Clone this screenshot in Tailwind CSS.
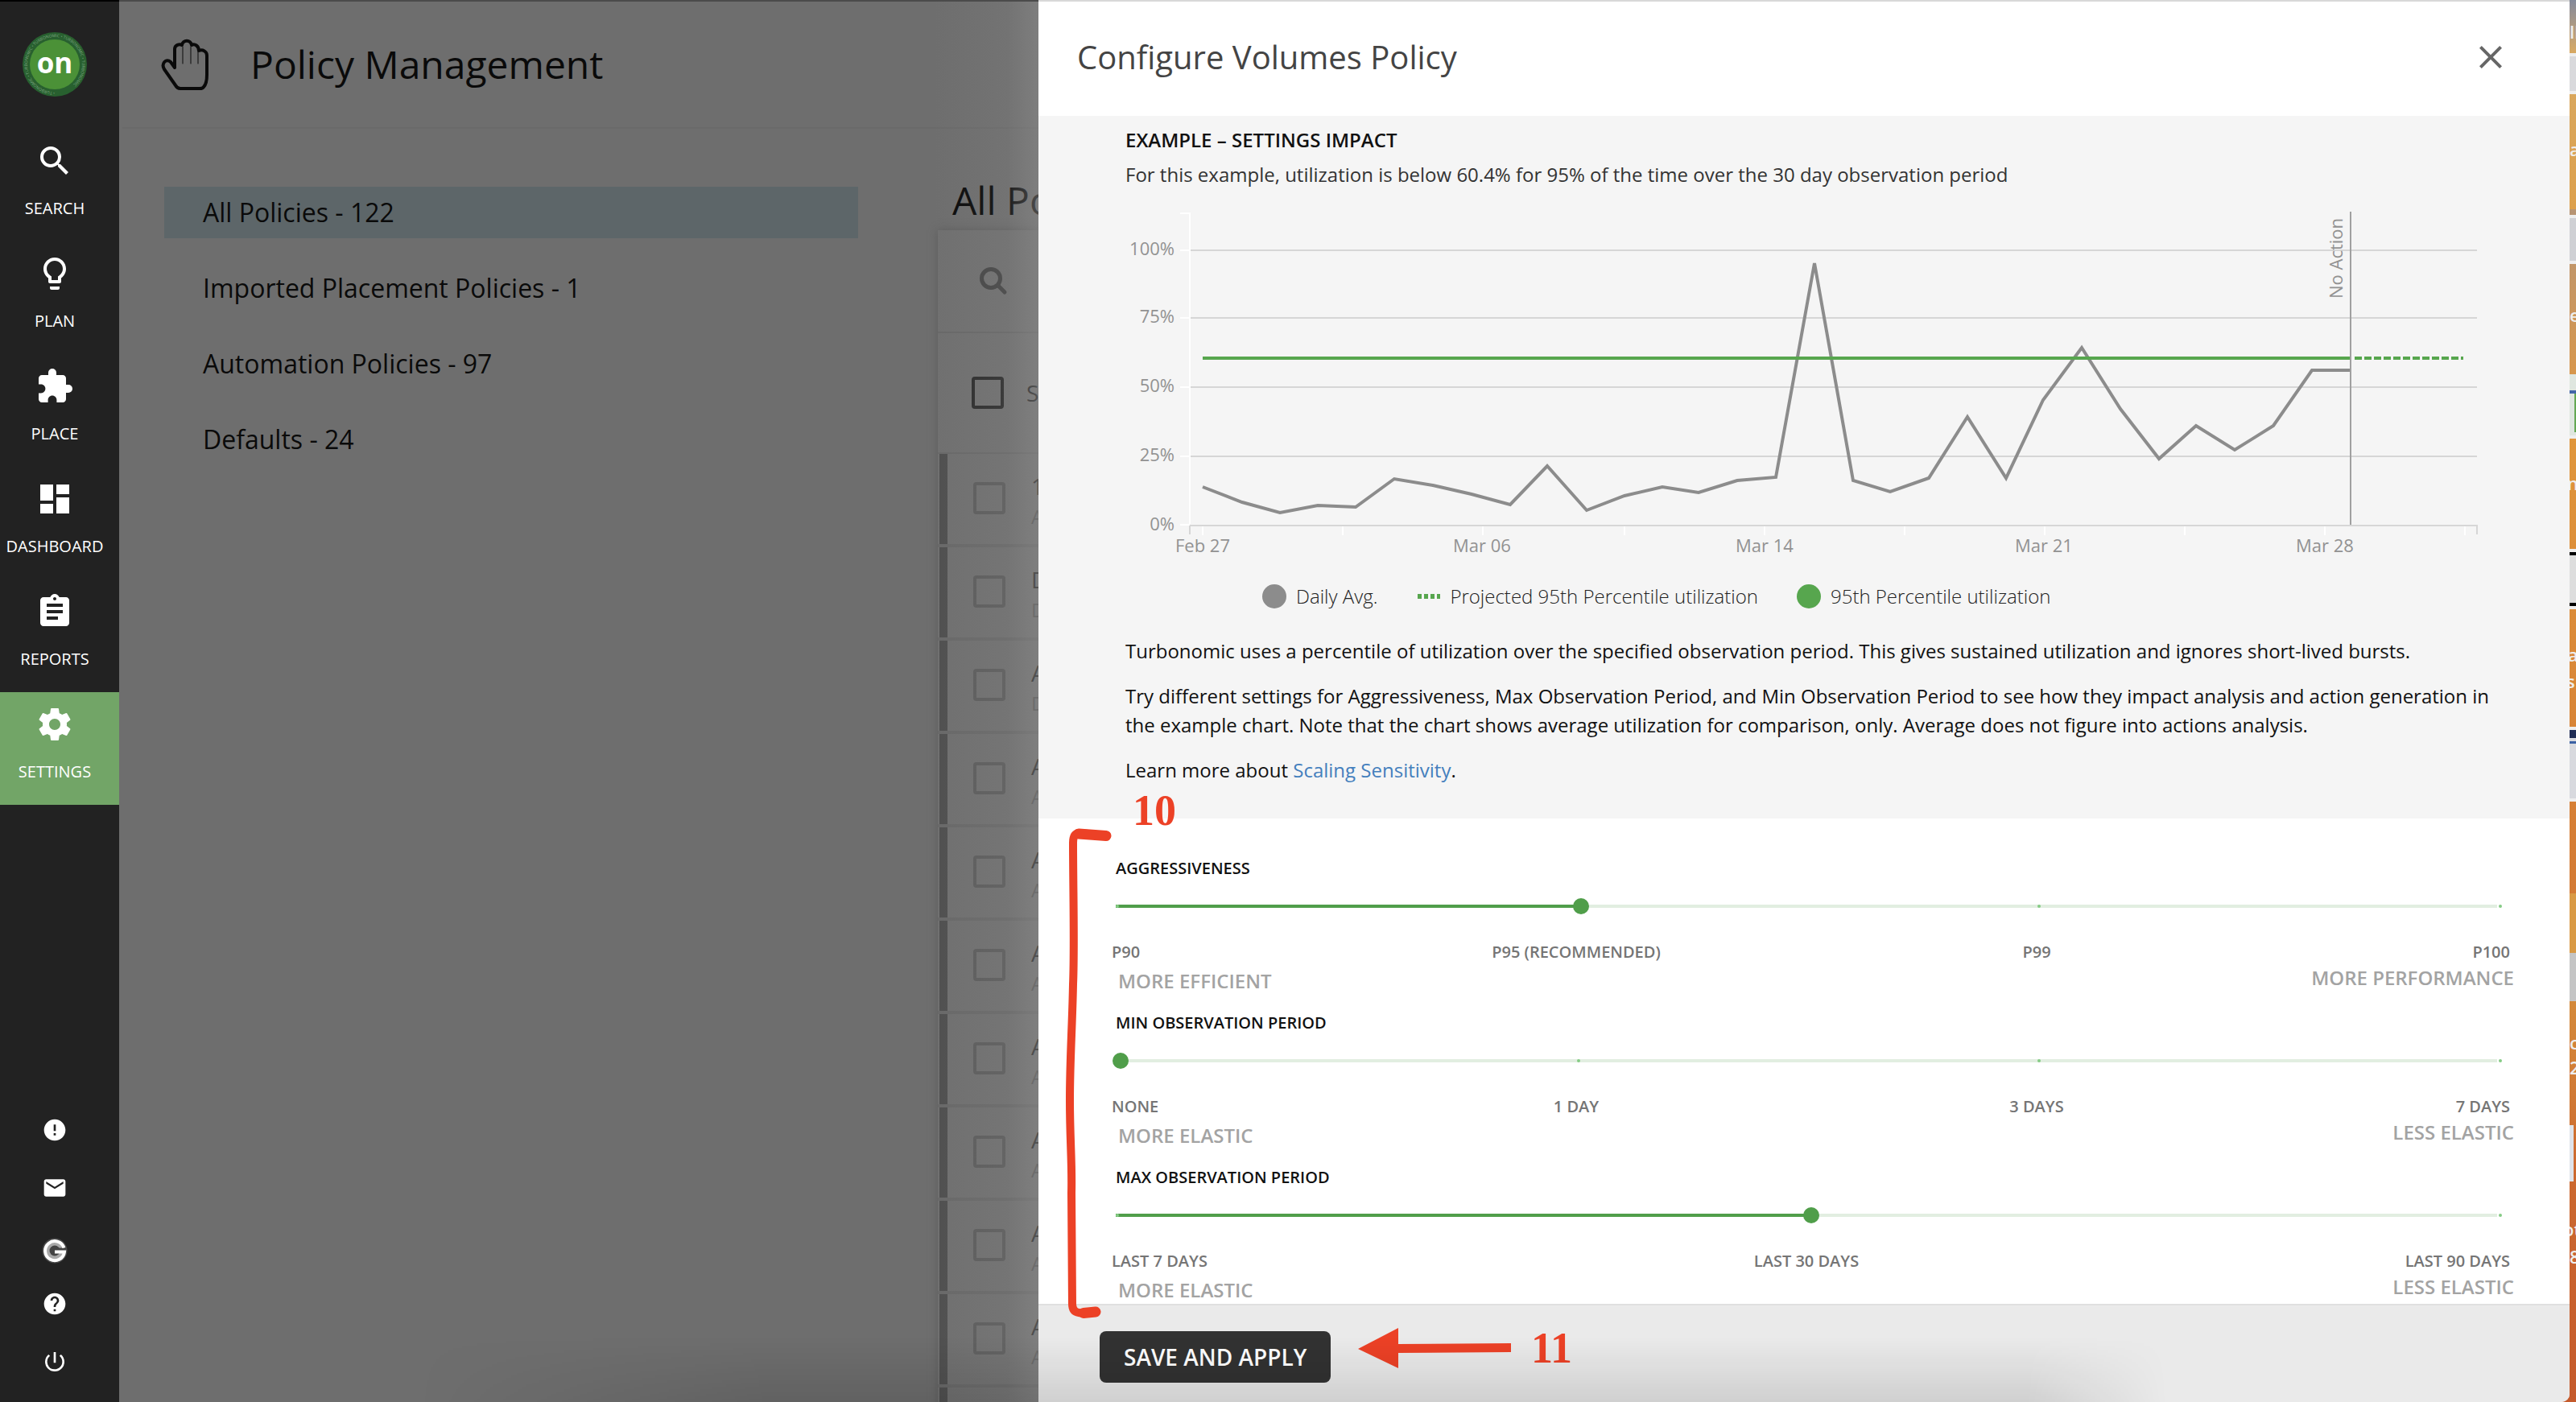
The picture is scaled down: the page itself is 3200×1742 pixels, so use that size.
<!DOCTYPE html>
<html lang="en">
<head>
<meta charset="utf-8">
<title>Policy Management</title>
<script src="https://cdn.jsdelivr.net/npm/@tailwindcss/browser@4"></script>
</head>
<body class="flex h-screen overflow-hidden bg-[#d9853a] font-['Open_Sans',sans-serif]">

<div class="relative z-10 flex min-w-0 flex-1 overflow-hidden rounded-br-[10px]">

  <!-- Primary navigation -->
  <nav class="flex w-[148px] shrink-0 flex-col border-t-2 border-black bg-[#222] pr-3 text-xl leading-7 text-white">
    <a href="#" class="mt-[38px] self-center" aria-label="Turbonomic home">
      <svg class="size-20" viewBox="0 0 80 80">
        <circle cx="40" cy="40" r="40" fill="#28602f"/>
        <circle cx="40" cy="40" r="31" fill="#4b9137"/>
        <defs><path id="ring" d="M40 74 A34 34 0 1 1 40.1 74"/></defs>
        <text fill="#7fa583" font-size="5" font-family="Open Sans"><textPath href="#ring">• TURBONOMIC • TURBONOMIC • TURBONOMIC • TURBONOMIC • TURBONOMIC</textPath></text>
        <text x="40" y="51" text-anchor="middle" fill="#fff" font-size="35" font-weight="700" font-family="Open Sans">on</text>
      </svg>
    </a>
    <a href="#" class="-mr-3 mt-10 flex h-[140px] flex-col items-center gap-[21px] pr-3 pt-4">
      <svg class="size-12 shrink-0" viewBox="0 0 24 24" fill="currentColor"><path d="M15.5 14h-.79l-.28-.27A6.47 6.47 0 0 0 16 9.5 6.5 6.5 0 1 0 9.5 16c1.61 0 3.09-.59 4.23-1.57l.27.28v.79l5 4.99L20.49 19l-4.99-5zm-6 0C7.01 14 5 11.99 5 9.500S7.010 5 9.500 5 14 7.010 14 9.500 11.990 14 9.500 14z"/></svg>
      <span>SEARCH</span>
    </a>
    <a href="#" class="-mr-3 flex h-[140px] flex-col items-center gap-[21px] pr-3 pt-4">
      <svg class="size-12 shrink-0" viewBox="0 0 24 24" fill="currentColor"><path d="M9 21c0 .55.45 1 1 1h4c.55 0 1-.45 1-1v-1H9v1zm3-19C8.140 2 5 5.140 5 9c0 2.380 1.190 4.470 3 5.740V17c0 .55.45 1 1 1h6c.55 0 1-.45 1-1v-2.260c1.810-1.270 3-3.360 3-5.740 0-3.860-3.140-7-7-7zm2.850 11.100l-.85.6V16h-4v-2.300l-.85-.6A4.997 4.997 0 0 1 7 9c0-2.760 2.240-5 5-5s5 2.240 5 5c0 1.630-.8 3.160-2.150 4.100z"/></svg>
      <span>PLAN</span>
    </a>
    <a href="#" class="-mr-3 flex h-[140px] flex-col items-center gap-[21px] pr-3 pt-4">
      <svg class="size-12 shrink-0" viewBox="0 0 24 24" fill="currentColor"><path d="M20.500 11H19V7c0-1.100-.9-2-2-2h-4V3.500a2.500 2.500 0 0 0-5 0V5H4c-1.100 0-1.990.9-1.990 2v3.800H3.500c1.490 0 2.700 1.210 2.700 2.700s-1.210 2.700-2.700 2.700H2V20c0 1.100.9 2 2 2h3.800v-1.500c0-1.490 1.210-2.700 2.700-2.700s2.700 1.210 2.700 2.700V22H17c1.100 0 2-.9 2-2v-4h1.500a2.500 2.500 0 0 0 0-5z"/></svg>
      <span>PLACE</span>
    </a>
    <a href="#" class="-mr-3 flex h-[140px] flex-col items-center gap-[21px] pr-3 pt-4">
      <svg class="size-12 shrink-0" viewBox="0 0 24 24" fill="currentColor"><path d="M3 13h8V3H3v10zm0 8h8v-6H3v6zm10 0h8V11h-8v10zm0-18v6h8V3h-8z"/></svg>
      <span>DASHBOARD</span>
    </a>
    <a href="#" class="-mr-3 flex h-[140px] flex-col items-center gap-[21px] pr-3 pt-4">
      <svg class="size-12 shrink-0" viewBox="0 0 24 24" fill="currentColor"><path d="M19 3h-4.180C14.400 1.840 13.300 1 12 1c-1.300 0-2.400.84-2.820 2H5c-1.100 0-2 .9-2 2v14c0 1.100.9 2 2 2h14c1.100 0 2-.9 2-2V5c0-1.100-.9-2-2-2zm-7 0c.55 0 1 .45 1 1s-.45 1-1 1-1-.45-1-1 .45-1 1-1zm2 14H7v-2h7v2zm3-4H7v-2h10v2zm0-4H7V7h10v2z"/></svg>
      <span>REPORTS</span>
    </a>
    <a href="#" aria-current="page" class="-mr-3 flex h-[140px] flex-col items-center gap-[21px] bg-[#72a567] pr-3 pt-4">
      <svg class="size-12 shrink-0" viewBox="0 0 24 24" fill="currentColor"><path d="M19.430 12.980c.04-.32.07-.64.07-.98s-.03-.66-.07-.98l2.110-1.650c.19-.15.24-.42.12-.64l-2-3.460c-.12-.22-.39-.3-.61-.22l-2.490 1c-.52-.4-1.080-.73-1.690-.98l-.38-2.650A.488.488 0 0 0 14 2h-4c-.25 0-.46.18-.49.42l-.38 2.650c-.61.25-1.170.59-1.690.98l-2.490-1c-.23-.09-.49 0-.61.22l-2 3.460c-.13.22-.07.49.12.64l2.110 1.650c-.04.32-.07.65-.07.98s.03.66.07.98l-2.110 1.650c-.19.15-.24.42-.12.64l2 3.460c.12.22.39.3.61.22l2.490-1c.52.4 1.080.73 1.690.98l.38 2.650c.03.24.24.42.49.42h4c.25 0 .46-.18.49-.42l.38-2.650c.61-.25 1.170-.59 1.690-.98l2.490 1c.23.09.49 0 .61-.22l2-3.460c.12-.22.07-.49-.12-.64l-2.110-1.650zM12 15.500c-1.930 0-3.500-1.570-3.500-3.500s1.570-3.500 3.500-3.500 3.500 1.570 3.500 3.500-1.570 3.500-3.500 3.500z"/></svg>
      <span>SETTINGS</span>
    </a>
    <div class="mt-auto flex flex-col items-center gap-10 pb-[34px]">
      <a href="#" aria-label="Alerts"><svg class="size-8" viewBox="0 0 24 24" fill="currentColor"><path d="M12 2C6.480 2 2 6.480 2 12s4.480 10 10 10 10-4.480 10-10S17.520 2 12 2zm1 15h-2v-2h2v2zm0-4h-2V7h2v6z"/></svg></a>
      <a href="#" aria-label="Mail"><svg class="size-8" viewBox="0 0 24 24" fill="currentColor"><path d="M20 4H4c-1.100 0-1.990.9-1.990 2L2 18c0 1.100.9 2 2 2h16c1.100 0 2-.9 2-2V6c0-1.100-.9-2-2-2zm0 4l-8 5-8-5V6l8 5 8-5v2z"/></svg></a>
      <a href="#" aria-label="Green Circle" class="mt-[6px]"><svg class="size-8" viewBox="0 0 32 32"><circle cx="16" cy="16" r="15.500" fill="#4a4a4a"/><circle cx="16" cy="16" r="11" fill="#a9a9a9"/><circle cx="16" cy="16" r="6.500" fill="#444"/><path d="M16 12.500H30V16H16z" fill="#444"/><path d="M27.500 12.500 A12 12 0 1 0 28 17.500 H16" fill="none" stroke="#fff" stroke-width="4"/></svg></a>
      <a href="#" aria-label="Help" class="-mt-[6px]"><svg class="size-8" viewBox="0 0 24 24" fill="currentColor"><path d="M12 2C6.480 2 2 6.480 2 12s4.480 10 10 10 10-4.480 10-10S17.520 2 12 2zm1 17h-2v-2h2v2zm2.070-7.750l-.9.92C13.450 12.900 13 13.500 13 15h-2v-.5c0-1.100.45-2.100 1.170-2.830l1.240-1.260c.37-.36.59-.86.59-1.410 0-1.100-.9-2-2-2s-2 .9-2 2H8c0-2.210 1.790-4 4-4s4 1.790 4 4c0 .88-.36 1.680-.93 2.250z"/></svg></a>
      <a href="#" aria-label="Log out"><svg class="size-8" viewBox="0 0 24 24" fill="currentColor"><path d="M13 3h-2v10h2V3zm4.830 2.170l-1.420 1.420A6.920 6.920 0 0 1 19 12c0 3.870-3.130 7-7 7A6.995 6.995 0 0 1 7.580 6.580L6.170 5.170A8.932 8.932 0 0 0 3 12a9 9 0 0 0 18 0c0-2.740-1.230-5.180-3.170-6.830z"/></svg></a>
    </div>
  </nav>

  <!-- Page behind the drawer -->
  <main class="relative flex min-w-0 flex-1 flex-col overflow-hidden whitespace-nowrap border-t-2 border-[#4b4b4b] bg-[#6e6e6e] text-[#0a0a0a]">
    <header class="ml-1 flex h-[158px] shrink-0 items-center border-b-2 border-[#6a6a6a] pl-12">
      <svg class="h-16 w-[60px]" viewBox="0 0 60 64" fill="none" stroke="#0a0a0a" stroke-linejoin="round" stroke-linecap="round">
        <path stroke-width="4" d="M17 36 V13 C17 8 23 6 26 8 C27 1 37 1 38 8 C42 6 47 9 47 15 C52 13 57 16 57 21 V45 C57 53 55 58 53 60 C52 62 50 62 48 62 H24 C21 62 19 60 18 58 L4 38 C0 31 6 24 12 29 L17 36"/>
        <path stroke-width="1" d="M27 10 V31 M37 10 V31 M46 16 V31"/>
      </svg>
      <h1 class="ml-[51px] text-5xl leading-none">Policy Management</h1>
    </header>
    <div class="flex min-h-0 flex-1">
      <ul class="ml-14 mt-[72px] flex w-[862px] shrink-0 flex-col gap-[30px] text-[32px] leading-[64px]">
        <li class="bg-[#5d6669] pl-12"><a href="#">All Policies - 122</a></li>
        <li class="pl-12"><a href="#">Imported Placement Policies - 1</a></li>
        <li class="pl-12"><a href="#">Automation Policies - 97</a></li>
        <li class="pl-12"><a href="#">Defaults - 24</a></li>
      </ul>
      <section class="ml-[99px] mt-[57px] flex min-w-0 flex-1 flex-col">
        <h2 class="pl-[18px] text-5xl leading-[64px]">All Policies</h2>
        <div class="mt-[5px] flex-1 bg-[#707070] shadow-[0_0_10px_#5c5c5c]">
          <div class="flex h-32 items-center border-b-2 border-[#686868] pl-[51px]">
            <svg class="size-9" viewBox="0 0 36 36" fill="none" stroke="#464646" stroke-width="5" stroke-linecap="round"><circle cx="15" cy="15" r="11.500"/><path d="M24 24l8 8"/></svg>
          </div>
          <div class="flex h-[150px] items-center border-b-2 border-[#696969] pl-[42px] text-[28px] text-[#1c1c1c]">
            <input id="all" type="checkbox" class="size-10 shrink-0 appearance-none rounded border-4 border-[#2d2d2d]">
            <label for="all" class="ml-7">Select All</label>
          </div>
          <ul id="policies"></ul>
        </div>
      </section>
    </div>
    <div class="pointer-events-none absolute inset-y-0 right-0 w-[130px] bg-linear-to-r from-[#8e8e8e]/0 via-[#8e8e8e]/15 via-70% to-[#8e8e8e]/50"></div>
  </main>

  <!-- Policy drawer -->
  <aside class="relative flex w-[1902px] max-w-[60%] shrink-0 flex-col border-t-2 border-[#d8d8d8] bg-white">
    <header class="flex h-[142px] shrink-0 items-center justify-between pb-1 pl-12 pr-[74px]">
      <h2 class="text-[40px] leading-none text-[#444]">Configure Volumes Policy</h2>
      <button type="button" aria-label="Close"><svg class="size-12" viewBox="0 0 24 24" fill="#666"><path d="M19 6.410L17.590 5 12 10.590 6.410 5 5 6.410 10.590 12 5 17.590 6.410 19 12 13.410 17.590 19 19 17.590 13.410 12z"/></svg></button>
    </header>

    <section class="bg-[#f5f5f5] pb-[42px] pl-[108px] pr-24 pt-4 text-2xl leading-9 text-[#111]">
      <h3 class="font-semibold leading-7">EXAMPLE – SETTINGS IMPACT</h3>
      <p class="mt-[11px] text-[#333]">For this example, utilization is below 60.4% for 95% of the time over the 30 day observation period</p>

      <svg class="mt-[11px] block w-full" viewBox="0 0 1698 450" role="img" aria-label="Utilization chart">
        <g stroke="#d6d6d6" stroke-width="2" fill="none">
          <path d="M80 65H1679M80 149H1679M80 235H1679M80 321H1679M80 418V407H1679V418"/>
        </g>
        <path stroke="#fff" stroke-width="2" fill="none" d="M68 19H80V405M68 65H80M68 149H80M68 235H80M68 321H80M68 406H80"/>
        <path stroke="#fff" stroke-width="2" fill="none" d="M96 408v11M270 408v11M444 408v11M620 408v11M794 408v11M968 408v11M1142 408v11M1316 408v11M1490 408v11M1664 408v11"/>
        <g fill="#929292" font-family="Open Sans" font-size="22" text-anchor="end">
          <text x="61" y="71">100%</text><text x="61" y="155">75%</text><text x="61" y="241">50%</text><text x="61" y="327">25%</text><text x="61" y="413">0%</text>
        </g>
        <g fill="#929292" font-family="Open Sans" font-size="22" text-anchor="middle">
          <text x="96" y="440">Feb 27</text><text x="443" y="440">Mar 06</text><text x="794" y="440">Mar 14</text><text x="1141" y="440">Mar 21</text><text x="1490" y="440">Mar 28</text>
        </g>
        <polyline fill="none" stroke="#8c8c8c" stroke-width="4" points="96,359 145,378 192,391 239,382 286,384 334,349 382,357 430,368 478,381 524,333 573,388 620,370 667,359 712,366 760,351 808,347 856,81 904,351 950,365 998,348 1046,272 1094,348 1140,251 1188,186 1236,262 1284,324 1330,283 1378,313 1426,283 1474,214 1522,214"/>
        <path stroke="#57a64e" stroke-width="4" d="M96 199H1522"/>
        <path stroke="#57a64e" stroke-width="4" stroke-dasharray="9 3" d="M1527 199H1662"/>
        <path stroke="#a0a0a0" stroke-width="2" d="M1522 17V406"/>
        <text transform="translate(1512 125) rotate(-90)" fill="#929292" font-family="Open Sans" font-size="22">No Action</text>
      </svg>

      <ul class="mt-[27px] flex items-center pl-[170px] font-light text-[#222]">
        <li class="flex items-center"><span class="mr-3 size-[30px] rounded-full bg-[#8c8c8c]"></span>Daily Avg.</li>
        <li class="ml-[50px] flex items-center"><svg class="mr-3 h-[6px] w-7" viewBox="0 0 28 6"><path stroke="#57a64e" stroke-width="6" stroke-dasharray="5 3" d="M0 3H28"/></svg>Projected 95th Percentile utilization</li>
        <li class="ml-12 flex items-center"><span class="mr-3 size-[30px] rounded-full bg-[#57a64e]"></span>95th Percentile utilization</li>
      </ul>

      <p class="mt-8">Turbonomic uses a percentile of utilization over the specified observation period. This gives sustained utilization and ignores short-lived bursts.</p>
      <p class="mt-5">Try different settings for Aggressiveness, Max Observation Period, and Min Observation Period to see how they impact analysis and action generation in the example chart. Note that the chart shows average utilization for comparison, only. Average does not figure into actions analysis.</p>
      <p class="mt-5">Learn more about <a href="#" class="text-[#447fbd]">Scaling Sensitivity</a>.</p>
    </section>

    <section class="flex min-h-0 flex-1 flex-col gap-[22px] overflow-hidden pl-[92px] pr-[74px] pt-12 text-xl leading-7 text-[#757575]">
      <div>
        <label for="aggr" class="ml-1 block font-semibold text-[#111]">AGGRESSIVENESS</label>
        <div class="relative mt-[23px] h-5">
          <div class="absolute left-1 right-4 top-2 h-1 bg-[#e2eee1]"><div class="h-1 bg-[#509e4a]" style="width:33.4%"></div></div>
          <div class="absolute left-1 right-[10px] top-2 flex justify-between"><i class="h-1 w-1 rounded-full bg-[#86cc86]"></i><i class="h-1 w-1 rounded-full bg-[#86cc86]"></i><i class="h-1 w-1 rounded-full bg-[#86cc86]"></i><i class="h-1 w-1 rounded-full bg-[#86cc86]"></i></div>
          <input id="aggr" type="range" min="0" max="3" value="1" class="relative block h-5 w-full appearance-none bg-transparent [&::-webkit-slider-thumb]:size-5 [&::-webkit-slider-thumb]:appearance-none [&::-webkit-slider-thumb]:rounded-full [&::-webkit-slider-thumb]:bg-[#509e4a]">
        </div>
        <div class="ml-1 mr-4 mt-[33px] grid grid-cols-6 whitespace-nowrap font-semibold">
          <span class="-ml-[5px]">P90</span><span class="col-span-2 text-center">P95 (RECOMMENDED)</span><span class="col-span-2 text-center">P99</span><span class="-mr-4 text-right">P100</span>
        </div>
        <div class="-mr-[5px] ml-[7px] mt-[2px] flex justify-between text-2xl leading-8 font-semibold text-[#a3a3a3]"><span class="pt-1">MORE EFFICIENT</span><span>MORE PERFORMANCE</span></div>
      </div>
      <div>
        <label for="min" class="ml-1 block font-semibold text-[#111]">MIN OBSERVATION PERIOD</label>
        <div class="relative mt-[23px] h-5">
          <div class="absolute left-1 right-4 top-2 h-1 bg-[#e2eee1]"></div>
          <div class="absolute left-1 right-[10px] top-2 flex justify-between"><i class="h-1 w-1 rounded-full bg-[#86cc86]"></i><i class="h-1 w-1 rounded-full bg-[#86cc86]"></i><i class="h-1 w-1 rounded-full bg-[#86cc86]"></i><i class="h-1 w-1 rounded-full bg-[#86cc86]"></i></div>
          <input id="min" type="range" min="0" max="3" value="0" class="relative block h-5 w-full appearance-none bg-transparent [&::-webkit-slider-thumb]:size-5 [&::-webkit-slider-thumb]:appearance-none [&::-webkit-slider-thumb]:rounded-full [&::-webkit-slider-thumb]:bg-[#509e4a]">
        </div>
        <div class="ml-1 mr-4 mt-[33px] grid grid-cols-6 whitespace-nowrap font-semibold">
          <span class="-ml-[5px]">NONE</span><span class="col-span-2 text-center">1 DAY</span><span class="col-span-2 text-center">3 DAYS</span><span class="-mr-4 text-right">7 DAYS</span>
        </div>
        <div class="-mr-[5px] ml-[7px] mt-[2px] flex justify-between text-2xl leading-8 font-semibold text-[#a3a3a3]"><span class="pt-1">MORE ELASTIC</span><span>LESS ELASTIC</span></div>
      </div>
      <div>
        <label for="max" class="ml-1 block font-semibold text-[#111]">MAX OBSERVATION PERIOD</label>
        <div class="relative mt-[23px] h-5">
          <div class="absolute left-1 right-4 top-2 h-1 bg-[#e2eee1]"><div class="h-1 bg-[#509e4a]" style="width:50%"></div></div>
          <div class="absolute left-1 right-[10px] top-2 flex justify-between"><i class="h-1 w-1 rounded-full bg-[#86cc86]"></i><i class="h-1 w-1 rounded-full bg-[#86cc86]"></i></div>
          <input id="max" type="range" min="0" max="2" value="1" class="relative block h-5 w-full appearance-none bg-transparent [&::-webkit-slider-thumb]:size-5 [&::-webkit-slider-thumb]:appearance-none [&::-webkit-slider-thumb]:rounded-full [&::-webkit-slider-thumb]:bg-[#509e4a]">
        </div>
        <div class="ml-1 mr-4 mt-[33px] grid grid-cols-4 whitespace-nowrap font-semibold">
          <span class="-ml-[5px]">LAST 7 DAYS</span><span class="col-span-2 text-center">LAST 30 DAYS</span><span class="-mr-4 text-right">LAST 90 DAYS</span>
        </div>
        <div class="-mr-[5px] ml-[7px] mt-[2px] flex justify-between text-2xl leading-8 font-semibold text-[#a3a3a3]"><span class="pt-1">MORE ELASTIC</span><span>LESS ELASTIC</span></div>
      </div>
    </section>

    <footer class="h-[122px] shrink-0 border-t-2 border-[#e0e0e0] bg-[#eaeaea] pl-[76px] pt-8">
      <button type="button" class="h-16 rounded-lg bg-[#323232] px-[30px] text-[28px] font-semibold leading-none text-white">SAVE AND APPLY</button>
    </footer>

    <!-- Step annotations -->
    <span class="absolute bottom-[708px] left-[117px] font-['Liberation_Serif',serif] text-[54px] font-bold leading-none text-[#ec4126]">10</span>
    <span class="absolute bottom-[40px] left-[612px] font-['Liberation_Serif',serif] text-[54px] font-bold leading-none text-[#ec4126]">11</span>
    <svg class="pointer-events-none absolute bottom-[96px] left-[30px] h-[620px] w-[70px]" viewBox="0 0 70 620" fill="none" stroke="#ec4126" stroke-width="10" stroke-linecap="round" stroke-linejoin="round"><path d="M55 12 L20 9 Q13 10 13 21 C13 80 15 150 13 197 C12 250 9 290 9 341 C9 390 12 420 11 456 L12 594 Q12 604 20 605 Q32 607 42 604" /><path stroke-width="13" d="M20 10L54 12.500M26 605.500L41 604"/></svg>
    <svg class="pointer-events-none absolute bottom-[41px] left-[397px] h-[52px] w-[192px]" viewBox="0 0 192 52" fill="#ec4126"><path d="M0 27L50 1V21L190 20V31L50 32V51z"/></svg>
  </aside>

  <!-- Soft shade along the bottom edge -->
  <div class="pointer-events-none absolute bottom-0 left-[520px] right-[500px] h-20 bg-linear-to-t from-black/11 to-transparent [mask-image:linear-gradient(to_right,transparent,black_20%,black_92%,transparent)]"></div>
</div>

<!-- Sliver of desktop beside the window -->
<div class="relative -ml-3 w-5 shrink-0 overflow-hidden bg-linear-to-b from-[#8d8f98] via-[#e0973c] via-30% to-[#c55a2c] text-[22px] font-semibold leading-7 text-[#eee]">
  <div class="absolute inset-x-0 top-0 h-[260px] bg-linear-to-b from-[#84899a] via-[#d8a962] via-25% to-[#dda04c]"></div>
  <div class="absolute inset-x-0 top-[1110px] h-[80px] bg-[#d99a45]"></div>
  <div class="absolute inset-x-0 top-[66px] h-[51px] border-y-4 border-[#eee] bg-[#d9d9dc]"></div>
  <div class="absolute inset-x-0 top-[267px] h-[61px] border-y-4 border-[#eee] bg-[#cfd0d4]"></div>
  <div class="absolute inset-x-0 top-[465px] h-[80px] border-b-4 border-[#eee] bg-[#dfe6df]"><div class="mt-5 h-1 bg-[#4467a8]"></div><div class="ml-[18px] h-12 w-1 bg-[#63a852]"></div></div>
  <div class="absolute inset-x-0 top-[682px] h-[75px] border-y-4 border-[#eee] bg-[#ddd]"><div class="h-full border-y-4 border-black"></div></div>
  <div class="absolute inset-x-0 top-[903px] h-[93px] border-y-4 border-[#eee] bg-[#d8d9de]"><div class="h-[10px] bg-[#1f2c55]"></div><div class="mt-1 h-[3px] bg-[#3c62a4]"></div></div>
  <div class="absolute inset-x-0 top-[1184px] h-[60px] bg-[#c5c5c5]"></div>
  <div class="absolute inset-x-0 top-[1244px] h-[200px] bg-linear-to-b from-[#d4893a] to-[#d4793a]/0"></div>
  <div class="absolute left-0 top-[1398px] h-[70px] w-[17px] bg-[#dfe3ea]"></div>
  <span class="absolute left-3 top-[25px]">ll</span>
  <span class="absolute left-3 top-[171px]">a</span>
  <span class="absolute left-3 top-[377px]">e</span>
  <span class="absolute left-[9px] top-[586px]">n</span>
  <span class="absolute left-[10px] top-[799px]">a</span>
  <span class="absolute left-2 top-[832px]">s</span>
  <span class="absolute left-3 top-[1281px]">c</span>
  <span class="absolute left-3 top-[1312px]">2</span>
  <span class="absolute left-1 top-[1513px]">ot</span>
  <span class="absolute left-3 top-[1547px]">8</span>
</div>

<script>
  // First characters of policy name and scope; the drawer covers the rest.
  const rows = [['1', 'A'], ['D', 'D'], ['A', 'D'], ['A', 'A'], ['A', 'A'], ['A', 'A'], ['A', 'A'], ['A', 'A'], ['A', 'A'], ['A', 'A'], ['A', 'A']];
  document.getElementById('policies').innerHTML = rows.map(([name, scope]) => `
    <li class="flex h-[116px] border-b-4 border-[#696969] pl-[2px]">
      <span class="w-[10px] shrink-0 bg-[#505050]"></span>
      <input type="checkbox" aria-label="${name}" class="ml-8 mt-[35px] size-10 shrink-0 appearance-none rounded border-4 border-[#5d5d5d]">
      <div class="ml-8 pt-5">
        <div class="text-[28px] leading-10 text-[#1c1c1c]">${name}</div>
        <div class="text-2xl leading-9 text-[#505050]">${scope}</div>
      </div>
    </li>`).join('');
</script>
</body>
</html>
